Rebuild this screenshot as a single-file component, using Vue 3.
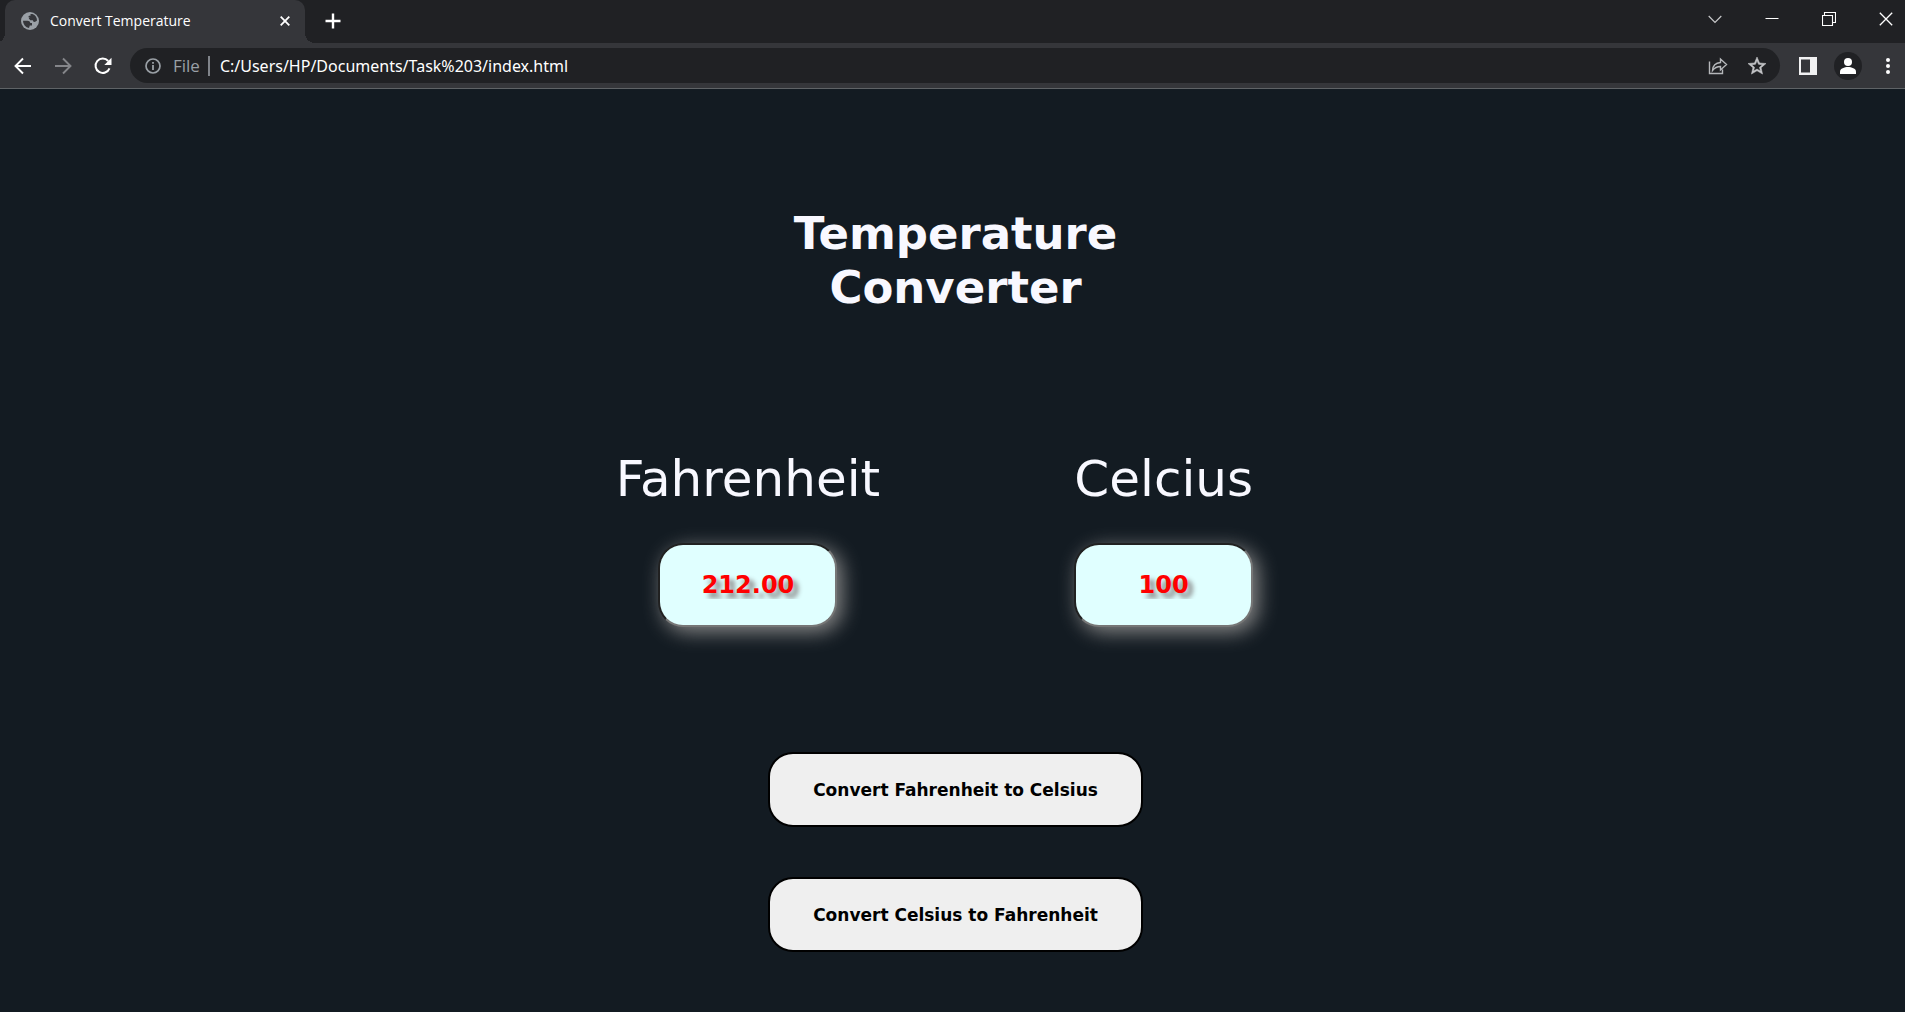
<script setup>
import { ref } from 'vue'

const url = ref('C:/Users/HP/Documents/Task%203/index.html')
const fahrenheit = ref('212.00')
const celsius = ref('100')

function toCelsius() {
  celsius.value = String(Math.round(((Number(fahrenheit.value) - 32) * 5) / 9))
}

function toFahrenheit() {
  fahrenheit.value = ((Number(celsius.value) * 9) / 5 + 32).toFixed(2)
}
</script>

<template>
  <div class="browser">
    <header class="chrome">
      <div class="tab-strip">
        <div class="tab">
          <svg class="favicon" width="18" height="18" viewBox="0 0 18 18" aria-hidden="true">
            <circle cx="9" cy="9" r="9" fill="#9aa0a6" />
            <path d="M9.500 2H11.500A7.200 7.200 0 0 1 16 8.500Q14.500 10.200 12.500 9.800L11.800 8.200H9.300L7.800 6.600L8.600 5.200H7.200L8 3.800H9.500z" fill="#35363a" />
            <path d="M2 8.800H6.500Q9.300 9 9.200 11H11V13.500H8.800L8 16A7.200 7.200 0 0 1 2 8.800z" fill="#35363a" />
          </svg>
          <span class="tab-title">Convert Temperature</span>
          <button class="icon-button tab-close" aria-label="Close tab">
            <svg width="10" height="10" viewBox="0 0 10 10"><path d="M.7.7l8.6 8.6M9.3.7L.7 9.3" stroke="#fff" stroke-width="1.8" /></svg>
          </button>
        </div>
        <button class="icon-button new-tab" aria-label="New tab">
          <svg width="16" height="16" viewBox="0 0 16 16"><path d="M8 .5v15M.5 8h15" stroke="#fff" stroke-width="2.4" /></svg>
        </button>
        <div class="window-controls">
          <button class="icon-button" aria-label="Search tabs">
            <svg width="14" height="14" viewBox="0 0 14 14"><path d="M.7 4l6.3 6.4L13.3 4" fill="none" stroke="#c8c9cb" stroke-width="1.2" /></svg>
          </button>
          <button class="icon-button" aria-label="Minimize">
            <svg width="14" height="14" viewBox="0 0 14 14"><path d="M.5 6.5h13" stroke="#fff" /></svg>
          </button>
          <button class="icon-button" aria-label="Restore">
            <svg width="14" height="14" viewBox="0 0 14 14"><path d="M.5 3.5h10v10H.5zM2.500 3V.5h11v10H11" fill="none" stroke="#fff" stroke-width="1.100" /></svg>
          </button>
          <button class="icon-button" aria-label="Close window">
            <svg width="14" height="14" viewBox="0 0 14 14"><path d="M.8.8l12.400 12.400M13.200.8L.8 13.200" stroke="#fff" stroke-width="1.300" /></svg>
          </button>
        </div>
      </div>
      <div class="toolbar">
        <nav class="history">
          <button class="icon-button" aria-label="Back">
            <svg width="18" height="18" viewBox="0 0 18 18"><path d="M17 9H2M9 1.500L1.500 9L9 16.500" fill="none" stroke="#fff" stroke-width="1.900" /></svg>
          </button>
          <button class="icon-button" aria-label="Forward" disabled>
            <svg width="18" height="18" viewBox="0 0 18 18"><path d="M1 9h15M9 1.500L16.500 9L9 16.500" fill="none" stroke="#85868a" stroke-width="1.900" /></svg>
          </button>
          <button class="icon-button" aria-label="Reload">
            <svg width="18" height="18" viewBox="0 0 18 18"><path d="M15.500 11.300A7.200 7.200 0 1 1 14.200 4" fill="none" stroke="#fff" stroke-width="2" /><path d="M17.500.8v7.200h-7.200z" fill="#fff" /></svg>
          </button>
        </nav>
        <div class="omnibox">
          <svg width="16" height="16" viewBox="0 0 16 16" aria-hidden="true"><circle cx="8" cy="8" r="7" fill="none" stroke="#9aa0a6" stroke-width="1.700" /><path d="M8 7v5M8 4v1.800" stroke="#9aa0a6" stroke-width="1.800" /></svg>
          <label class="scheme" for="address">File</label>
          <span class="divider"></span>
          <input id="address" v-model="url" class="address" type="text" spellcheck="false" />
          <button class="icon-button share" aria-label="Share">
            <svg width="20" height="18" viewBox="0 0 20 18"><path d="M1.500 4.500v12h13v-4M4.500 13.500Q5 6 12.500 5.500V2L18.500 7.500L12.500 13V9.500Q7.500 9.500 4.500 13.500z" fill="none" stroke="#b5b7ba" stroke-width="1.400" /></svg>
          </button>
          <button class="icon-button" aria-label="Bookmark">
            <svg width="18" height="18" viewBox="0 0 24 24"><path d="M22 9.240l-7.190-.62L12 2 9.190 8.630 2 9.240l5.460 4.730L5.820 21 12 17.270 18.180 21l-1.630-7.030L22 9.240zM12 15.400l-3.760 2.270 1-4.280-3.320-2.880 4.380-.38L12 6.100l1.710 4.040 4.380.38-3.320 2.880 1 4.280L12 15.400z" fill="#c4c5c8" stroke="#c4c5c8" stroke-width=".6" transform="translate(-2.400 -2.400) scale(1.200)" /></svg>
          </button>
        </div>
        <button class="icon-button" aria-label="Side panel">
          <svg width="18" height="18" viewBox="0 0 18 18"><path d="M0 0h18v18H0zM2 2.500v13h9v-13z" fill="#f1f1f2" fill-rule="evenodd" /></svg>
        </button>
        <button class="icon-button profile" aria-label="Profile">
          <svg width="28" height="28" viewBox="0 0 28 28"><circle cx="14" cy="14" r="14" fill="#202124" /><circle cx="14" cy="10" r="4" fill="#fff" /><path d="M6 22v-2.500c0-3 4.500-4.500 8-4.500s8 1.500 8 4.500V22z" fill="#fff" /></svg>
        </button>
        <button class="icon-button" aria-label="Menu">
          <svg width="4" height="18" viewBox="0 0 4 18"><circle cx="2" cy="3" r="2" fill="#fff" /><circle cx="2" cy="9" r="2" fill="#fff" /><circle cx="2" cy="15" r="2" fill="#fff" /></svg>
        </button>
      </div>
    </header>

    <main class="converter">
      <h1>Temperature<br />Converter</h1>
      <div class="fields">
        <div class="field">
          <label for="fahrenheit">Fahrenheit</label>
          <input id="fahrenheit" v-model="fahrenheit" type="text" />
        </div>
        <div class="field">
          <label for="celsius">Celcius</label>
          <input id="celsius" v-model="celsius" type="text" />
        </div>
      </div>
      <div class="actions">
        <button @click="toCelsius">Convert Fahrenheit to Celsius</button>
        <button @click="toFahrenheit">Convert Celsius to Fahrenheit</button>
      </div>
    </main>
  </div>
</template>

<style>
body {
  margin: 0;
  background: #131b22;
}
</style>

<style scoped>
* {
  box-sizing: border-box;
}

.browser {
  display: flex;
  flex-direction: column;
  min-height: 100vh;
}

.chrome {
  font-family: "Open Sans", "Noto Sans", sans-serif;
  color: #fff;
  background: #35363a;
  border-bottom: 1px solid #5f6366;
}

.icon-button {
  display: flex;
  align-items: center;
  justify-content: center;
  padding: 0;
  border: 0;
  background: none;
}

.tab-strip {
  display: flex;
  align-items: center;
  height: 43px;
  padding-left: 5px;
  background: #202124;
}

.tab {
  display: flex;
  align-items: center;
  width: 300px;
  height: 43px;
  padding: 0 15px 2px 16px;
  border-radius: 10px 10px 0 0;
  background: #35363a;
  position: relative;
}

.tab::before,
.tab::after {
  content: "";
  position: absolute;
  bottom: 0;
  width: 10px;
  height: 10px;
}

.tab::before {
  right: 100%;
  background: radial-gradient(circle at 0 0, #202124 10px, #35363a 10px);
}

.tab::after {
  left: 100%;
  background: radial-gradient(circle at 100% 0, #202124 10px, #35363a 10px);
}

.tab-title {
  flex: 1;
  margin-left: 11px;
  font-size: 14px;
  line-height: 20px;
}

.new-tab {
  margin: 0 0 1px 20px;
}

.window-controls {
  display: flex;
  gap: 43px;
  margin: 0 12px 6px auto;
}

.toolbar {
  display: flex;
  align-items: center;
  height: 45px;
  padding: 0 15px 0 14px;
}

.history {
  display: flex;
  gap: 22px;
}

.omnibox {
  display: flex;
  flex: 1;
  align-items: center;
  height: 35px;
  margin: 0 19px 0 18px;
  padding: 0 14px 0 15px;
  border-radius: 18px;
  background: #202124;
}

.scheme {
  margin-left: 12px;
  font-size: 17px;
  color: #9aa0a6;
}

.divider {
  width: 2px;
  height: 20px;
  margin: 0 10px 0 8px;
  background: #80848a;
}

.address {
  flex: 1;
  min-width: 0;
  padding: 0;
  border: 0;
  outline: 0;
  background: none;
  font-family: "Noto Sans", "Open Sans", sans-serif;
  font-size: 16px;
  color: #fff;
}

.share {
  margin-right: 20px;
}

.profile {
  margin: 0 24px 0 17px;
}

.converter {
  display: flex;
  flex: 1;
  flex-direction: column;
  align-items: center;
  padding: 118px 0 59px 6px;
  font-family: Verdana, "DejaVu Sans", sans-serif;
  color: #f8f8ff;
}

h1 {
  margin: 0;
  font-size: 45px;
  line-height: 54px;
  text-align: center;
}

.fields {
  display: flex;
  gap: 194px;
  margin-top: 134px;
  padding-right: 42px;
}

.field {
  display: flex;
  flex-direction: column;
  align-items: center;
  gap: 34px;
}

.field label {
  font-size: 50px;
  line-height: 60px;
}

.field input {
  width: 179px;
  height: 84px;
  border: 2px inset #767676;
  border-radius: 25px;
  outline: 0;
  background: #e0ffff;
  box-shadow: 5px 5px 20px #888;
  font-family: inherit;
  font-size: 24px;
  font-weight: bold;
  text-align: center;
  text-shadow: 5px 5px 5px #888;
  color: #f00;
}

.actions {
  display: flex;
  flex-direction: column;
  gap: 50px;
  margin-top: 125px;
}

.actions button {
  height: 75px;
  padding: 0 43px;
  border: 2px solid #000;
  border-radius: 25px;
  background: #efefef;
  font-family: inherit;
  font-size: 17px;
  font-weight: bold;
  color: #000;
}
</style>
